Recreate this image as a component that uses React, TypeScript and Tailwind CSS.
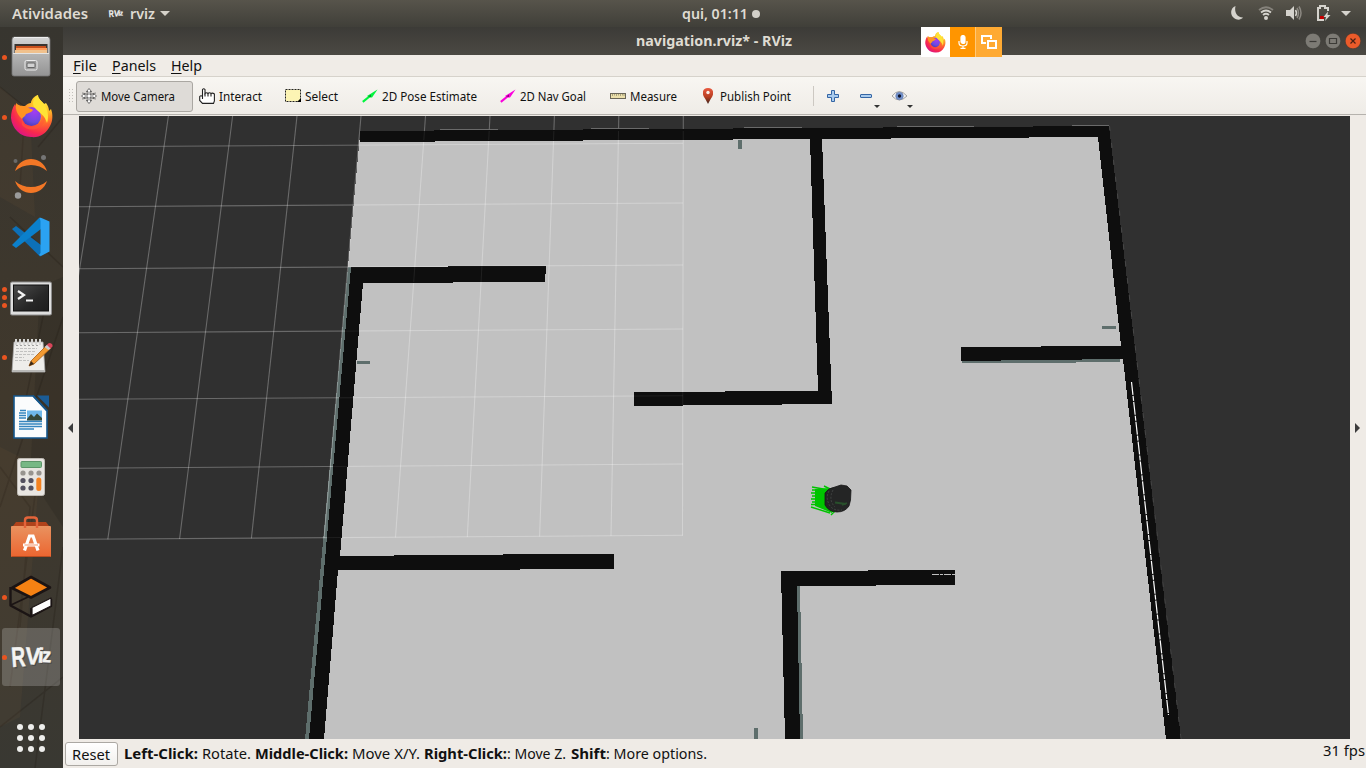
import React, { useLayoutEffect, useRef, useState } from "react";

type FitProps = { w: number; children: React.ReactNode; className?: string };

/* Text label condensed horizontally so that it fills exactly `w` pixels. */
function Fit({ w, children, className = "" }: FitProps) {
  const ref = useRef<HTMLSpanElement>(null);
  const [k, setK] = useState(1);
  useLayoutEffect(() => {
    if (ref.current && ref.current.offsetWidth) {
      const range = document.createRange();
      range.selectNodeContents(ref.current);
      const natural = range.getBoundingClientRect().width / k;
      setK(w / natural);
    }
  }, [w]);
  return (
    <span className={`block shrink-0 whitespace-nowrap ${className}`} style={{ width: w }}>
      <span ref={ref} className="inline-block origin-left" style={{ transform: `scaleX(${k})` }}>
        {children}
      </span>
    </span>
  );
}

function Firefox({ className }: { className: string }) {
  return (
    <svg viewBox="0 0 42 43" className={className}>
      <defs>
        <radialGradient id="ffBody" cx="0.78" cy="0.12" r="1">
          <stop offset="0" stopColor="#fff04a" />
          <stop offset="0.3" stopColor="#ffbd27" />
          <stop offset="0.55" stopColor="#ff6a2c" />
          <stop offset="0.8" stopColor="#f8284e" />
          <stop offset="1" stopColor="#d9138a" />
        </radialGradient>
        <radialGradient id="ffGlobe" cx="0.65" cy="0.25" r="0.9">
          <stop offset="0" stopColor="#a43cf2" />
          <stop offset="0.6" stopColor="#6a4ae0" />
          <stop offset="1" stopColor="#3f35a8" />
        </radialGradient>
      </defs>
      <path d="M4 9 C5 11 5 12 7 13 C9 11 12 11 14 11 C16 9 18 8 20 8 C20 5 23 1 27 0 C27 4 31 6 33 9 L35 8 C37 11 38 13 38 16 L40 14 C42 19 42 26 39 31 C35 39 28 43 20 42 C9 42 1 33 0 23 C0 18 1 13 4 9Z" fill="url(#ffBody)" />
      <circle cx="20.5" cy="21.500" r="9.500" fill="url(#ffGlobe)" />
      <path d="M5 8 C8 11 11 11 15 11 C17 14 21 13 22 15 C20 18 17 18 15 19 C14 22 12 22 11 24 C7 20 4 16 5 8Z" fill="#ff9422" />
      <path d="M11 25 C13 34 26 34 30 26 C32 19 28 13 23 11 C30 10 36 17 34 25 C31 35 17 38 11 30Z" fill="#ff5637" opacity="0.6" />
      <path d="M27 0 C27 4 31 6 33 9 C37 14 38 22 36 28 C34 20 28 18 24 13 C20 9 23 2 27 0Z" fill="#ffe336" />
    </svg>
  );
}

function RvizLetters() {
  return (
    <>
      <text x="12" y="40" fontSize="28" transform="rotate(-4 12 40)" textLength="14" lengthAdjust="spacingAndGlyphs">R</text>
      <text x="25" y="37" fontSize="24" transform="rotate(3 25 37)" textLength="15" lengthAdjust="spacingAndGlyphs">V</text>
      <text x="37.500" y="35.500" fontSize="21" transform="rotate(4 38 35)">i</text>
      <text x="42" y="35" fontSize="20" transform="rotate(2 42 35)" textLength="9" lengthAdjust="spacingAndGlyphs">z</text>
    </>
  );
}

function RvizMark() {
  return (
    <g fontFamily="'Liberation Sans', sans-serif" fontWeight="700">
      <g fill="#4a4a48" transform="translate(1.2 1.4)"><RvizLetters /></g>
      <g fill="#f4f4f2" stroke="#f4f4f2" strokeWidth="0.500"><RvizLetters /></g>
    </g>
  );
}

const rowSvg = "block h-[60px] w-[63px]";

const dock: { dots: number[]; active?: boolean; icon: React.ReactNode }[] = [
  {
    dots: [30],
    icon: (
      <svg viewBox="0 0 63 60" className={rowSvg}>
        <defs>
          <linearGradient id="cab" x1="0" y1="0" x2="0" y2="1">
            <stop offset="0" stopColor="#d6d6d6" />
            <stop offset="0.45" stopColor="#b4b4b4" />
            <stop offset="1" stopColor="#939393" />
          </linearGradient>
        </defs>
        <path d="M14 10h34q2 0 2 3v34q0 2-2 2H14q-2 0-2-2V13q0-3 2-3z" fill="url(#cab)" stroke="#777" strokeWidth="0.8" />
        <path d="M14 10.500h34" stroke="#eee" />
        <rect x="14.500" y="17" width="33" height="9" fill="#3b3430" />
        <rect x="16" y="19" width="30" height="7" fill="#c94f1c" />
        <rect x="16" y="21" width="31" height="2" fill="#ff9b58" />
        <rect x="15" y="23" width="32" height="3" fill="#f0c18d" />
        <path d="M13 26.500h36" stroke="#e4e4e4" />
        <rect x="25" y="33.500" width="12" height="9.500" rx="1.500" fill="#9b9b9b" stroke="#ededed" />
        <rect x="27" y="36" width="8" height="4.500" rx="1" fill="#d2d2d2" stroke="#666" />
      </svg>
    ),
  },
  {
    dots: [30],
    icon: (
      <div className="flex h-[60px] w-[63px] items-center justify-center pb-0.5">
        <Firefox className="h-[43px] w-[42px]" />
      </div>
    ),
  },
  {
    dots: [],
    icon: (
      <svg viewBox="0 0 63 60" className={rowSvg}>
        <path d="M15 24 C20 8 42 8 47 24 C38 16 24 16 15 24Z" fill="#f37726" />
        <path d="M15 34 C20 50 42 50 47 34 C38 42 24 42 15 34Z" fill="#f37726" />
        <circle cx="43.500" cy="10.500" r="2.500" fill="#757575" />
        <circle cx="15.500" cy="14" r="2" fill="#6a6a6a" />
        <circle cx="18" cy="48.500" r="3.200" fill="#9b9b9b" />
      </svg>
    ),
  },
  {
    dots: [],
    icon: (
      <svg viewBox="0 0 63 60" className={rowSvg}>
        <path d="M12 22 L16 19 L41 38 V49 L40 49.500 Z" fill="#0d70b8" />
        <path d="M12 38 L16 41 L41 22 V11 L39 11 Z" fill="#0b80cc" />
        <path d="M39.500 10.500 L41.500 11 L49.500 14.500 V44.500 L41 49 L39 48 L40.500 46 V14 Z" fill="#2ba2f2" />
      </svg>
    ),
  },
  {
    dots: [22, 30, 38],
    icon: (
      <svg viewBox="0 0 63 60" className={rowSvg}>
        <defs>
          <linearGradient id="term" x1="0" y1="0" x2="1" y2="1">
            <stop offset="0" stopColor="#4b4b4b" />
            <stop offset="0.6" stopColor="#272727" />
            <stop offset="1" stopColor="#1d1d1d" />
          </linearGradient>
        </defs>
        <rect x="10.500" y="15" width="41" height="33" rx="1.500" fill="#dedede" stroke="#8e8e8e" />
        <rect x="13.500" y="18" width="35" height="26" fill="url(#term)" stroke="#111" />
        <path d="M18 24 L24 28 L18 32" fill="none" stroke="#f2f2f2" strokeWidth="2.200" />
        <path d="M26 33.500h7" stroke="#f2f2f2" strokeWidth="2" />
      </svg>
    ),
  },
  {
    dots: [30],
    icon: (
      <svg viewBox="0 0 63 60" className={rowSvg}>
        <path d="M14 15h29l2 30H12z" fill="#eeedea" stroke="#aaa" strokeWidth="0.8" />
        <path d="M12 43h33v2H12z" fill="#b9b9b7" />
        <path d="M16 12v6M20 12v6M24 12v6M28 12v6M32 12v6M36 12v6M40 12v6" stroke="#d6d6d4" strokeWidth="2" />
        <path d="M17 18v1M21 18v1M25 18v1M29 18v1M33 18v1M37 18v1" stroke="#555" />
        <path d="M16 21.500h21M16 24.500h19M15 27.500h20M15 30.500h9M15 33.500h14" stroke="#c2c2c0" strokeDasharray="3 1" />
        <path d="M29 39 L31 34 L47 18 L51 21 L34 37 Z" fill="#f29a32" stroke="#a85d12" strokeWidth="0.8" />
        <path d="M29 39 L31 34 L34 37 Z" fill="#3a2a1a" />
        <path d="M46 18.500 L49 16 Q53 16 52.500 19.500 L50 22 Z" fill="#d9455a" />
        <path d="M44.500 20 L47 18 L50.500 21.500 L48.500 23Z" fill="#c9cccf" />
      </svg>
    ),
  },
  {
    dots: [],
    icon: (
      <svg viewBox="0 0 63 60" className={rowSvg}>
        <path d="M14 9h19l14 15v27H14z" fill="#fbfcfd" stroke="#15568c" strokeWidth="1.600" />
        <path d="M33 8.500 L47.500 24" stroke="#15568c" strokeWidth="1.800" />
        <path d="M37 8.500h12v12z" fill="#1b5c96" />
        <rect x="27" y="23.500" width="15" height="10" fill="#6fb8ea" />
        <path d="M27 32 L31 27 L34 30 L37 26.500 L42 31 V33.500 H27Z" fill="#36483a" />
        <path d="M20 23.500h6M19 26h7M19 28.500h7M19 31h7M19 34.500h23M19 37h23M19 39.500h23M19 42h15" stroke="#3585bf" strokeWidth="1.300" />
      </svg>
    ),
  },
  {
    dots: [],
    icon: (
      <svg viewBox="0 0 63 60" className={rowSvg}>
        <rect x="17.500" y="11.500" width="27" height="37" rx="2" fill="#e8e5e1" stroke="#bcb8b2" />
        <rect x="21" y="14.500" width="20.500" height="6" rx="1" fill="#77b885" stroke="#5d9569" />
        <g fill="#98948f">
          <circle cx="23" cy="26" r="2.600" /><circle cx="31" cy="26" r="2.600" /><circle cx="39" cy="26" r="2.600" />
        </g>
        <g fill="#54505f">
          <circle cx="23" cy="33.500" r="2.600" /><circle cx="31" cy="33.500" r="2.600" />
          <circle cx="23" cy="41" r="2.600" /><circle cx="31" cy="41" r="2.600" />
        </g>
        <rect x="36.300" y="30.500" width="5" height="13.500" rx="2.500" fill="#f58220" />
      </svg>
    ),
  },
  {
    dots: [],
    icon: (
      <svg viewBox="0 0 63 60" className={rowSvg}>
        <defs>
          <linearGradient id="bag" x1="0" y1="0" x2="0" y2="1">
            <stop offset="0" stopColor="#e9925f" />
            <stop offset="1" stopColor="#ec6530" />
          </linearGradient>
        </defs>
        <rect x="11" y="19" width="40" height="31" rx="1" fill="url(#bag)" />
        <path d="M13 19 L16 15 H46 L49 19Z" fill="#b0431b" />
        <path d="M25 21 V13.500 Q25 10.500 28 10.500 H34 Q37 10.500 37 13.500 V21" fill="none" stroke="#e4643a" strokeWidth="2.400" />
        <path d="M12 49.500h38" stroke="#b84c20" />
        <path d="M24.500 43.500 L29.500 29 H33 L38 43.500" fill="none" stroke="#fff" strokeWidth="3.200" />
        <path d="M23 38h16.500" stroke="#fff" strokeWidth="3" />
        <path d="M24.500 38h13.500" stroke="#f07a48" strokeWidth="0.800" />
      </svg>
    ),
  },
  {
    dots: [30],
    icon: (
      <svg viewBox="0 0 63 60" className={rowSvg}>
        <path d="M12 21 L31 10 L50 20.500 L31 30.500Z" fill="#f58113" stroke="#1b1414" strokeWidth="2.600" strokeLinejoin="round" />
        <path d="M10.500 20 V38.500 L31 49.500 L51 39 V32" fill="none" stroke="#1b1414" strokeWidth="2.400" strokeLinejoin="round" />
        <path d="M11 38 L28 30M31 41V49" stroke="#1b1414" strokeWidth="1.800" />
        <path d="M32 40.500 L51 31 V39 L32 48.500Z" fill="#fff" stroke="#1b1414" strokeWidth="1.200" strokeLinejoin="round" />
      </svg>
    ),
  },
  {
    dots: [30],
    active: true,
    icon: (
      <svg viewBox="0 0 63 60" className={rowSvg}>
        <RvizMark />
      </svg>
    ),
  },
];

function Dock() {
  return (
    <aside className="relative flex w-[63px] shrink-0 flex-col overflow-hidden bg-linear-to-b from-[#37352f] via-[#40382c] to-[#393832]">
      <svg viewBox="0 0 63 741" className="absolute inset-0 h-[741px] w-[63px]">
        <g stroke="#241f18" strokeWidth="1.500" opacity="0.3" fill="none">
          <path d="M0 60 L25 80 L20 160 M38 120 L63 90 M10 190 L63 240 M45 280 L20 400 M63 290 L0 480 M0 440 L30 480 L20 600 M40 430 L10 660 M63 520 L35 741 M0 700 L63 650" />
        </g>
        <path d="M0 60 L30 85 L35 190 L0 170Z M0 420 L40 440 L20 690 L0 700Z" fill="#70543a" opacity="0.14" />
        <path d="M40 260 L63 250 V500 L30 450Z" fill="#1d1c18" opacity="0.2" />
      </svg>
      {dock.map((d, i) => (
        <div key={i} className="relative h-[60px] shrink-0">
          {d.active && <div className="absolute inset-y-px left-[2px] w-[58px] rounded-[3px] bg-white/20" />}
          <div className="relative">{d.icon}</div>
          {d.dots.map((y) => (
            <i key={y} className="absolute left-[2px] size-[5px] rounded-full bg-[#e95420]" style={{ top: y - 2 }} />
          ))}
        </div>
      ))}
      <div className="relative mt-[37px] ml-[17px] grid w-7 grid-cols-3 gap-[5px]">
        {Array.from({ length: 9 }, (_, i) => (
          <i key={i} className="size-[6px] rounded-full bg-[#eeeeec]" />
        ))}
      </div>
    </aside>
  );
}

function TopBar() {
  return (
    <header className="flex h-[27px] shrink-0 items-center bg-linear-to-b from-[#57544b] to-[#403f39] text-[14px] leading-[27px] font-semibold text-[#dfdbd2]">
      <Fit w={76} className="ml-3">Atividades</Fit>
      <svg viewBox="9 17 45 27" className="ml-5 h-[10px] w-4"><RvizMark /></svg>
      <Fit w={25} className="ml-[6px]">rviz</Fit>
      <svg viewBox="0 0 10 5" className="ml-[5px] h-[5px] w-[10px]"><path d="M0 0h10L5 5z" fill="#d5d2c9" /></svg>
      <Fit w={66} className="ml-[512px]">qui, 01:11</Fit>
      <i className="ml-1 size-2 rounded-full bg-[#d2cfc8]" />
      <div className="ml-auto flex items-center pr-[15px] pb-px">
        <svg viewBox="0 0 14 16" className="h-4 w-[14px]"><path d="M5.500 1 C0 3 0 10 4 13 C7 15.500 11 15 13 12.500 C7 12.500 4 7 5.500 1Z" fill="#d5d3cd" /></svg>
        <svg viewBox="0 0 16 16" className="ml-[14px] h-4 w-4" fill="none" strokeWidth="1.800">
          <path d="M1 5 Q8 -0.500 15 5" stroke="#85827b" />
          <path d="M3 7.500 Q8 3.500 13 7.500M5 10 Q8 7.500 11 10" stroke="#d5d3cd" />
          <circle cx="8" cy="13" r="2" fill="#d5d3cd" />
        </svg>
        <svg viewBox="0 0 16 16" className="ml-3 h-4 w-4" fill="none" strokeWidth="1.500">
          <path d="M0 5h4l4-4v14l-4-4H0z" fill="#d5d3cd" />
          <path d="M9.500 5 Q11.500 8 9.500 11" stroke="#d5d3cd" />
          <path d="M11 3 Q14 8 11 13M13 1.500 Q17 8 13 14.500" stroke="#8c8982" />
        </svg>
        <svg viewBox="0 0 15 16" className="ml-[14px] h-4 w-[15px]">
          <path d="M8 15H2V3H4V1H9V3H12V6" fill="none" stroke="#d5d3cd" strokeWidth="2" />
          <path d="M4 11h4v3H4z" fill="#c50000" />
          <path d="M12 6.500 L7.500 12 H10 L9 16 L14.500 10 H11.500Z" fill="#d5d3cd" />
        </svg>
        <svg viewBox="0 0 10 5" className="ml-[10px] h-[5px] w-[10px]"><path d="M0 0h10L5 5z" fill="#d5d3cd" /></svg>
      </div>
    </header>
  );
}

function TitleBar() {
  return (
    <div className="flex h-7 items-center bg-linear-to-b from-[#3c3b37] to-[#4b4943] text-[13.500px] leading-7 font-bold text-[#dfdbd2]">
      <Fit w={156} className="ml-[573px]">navigation.rviz* - RViz</Fit>
      <div className="ml-auto flex gap-1 pr-[5px]">
        {["M4.500 8.500h7", "M4.500 5.500h7v5h-7z", "M5.500 5.500l5 5M10.500 5.500l-5 5"].map((d, i) => (
          <svg key={d} viewBox="0 0 16 16" className="size-4">
            <circle cx="8" cy="8" r="7.800" fill={i === 2 ? "#ec5b2a" : "#7d7b75"} stroke="#33322e" strokeWidth="0.500" />
            <path d={d} fill="none" stroke={i === 2 ? "#4a2013" : "#3c3b37"} strokeWidth="1.200" />
          </svg>
        ))}
      </div>
    </div>
  );
}

function MenuBar() {
  return (
    <div className="flex h-[22px] items-start border-b border-[#d6d2cb] bg-[#f0ece7] pl-[10px] text-[14.500px] leading-5 text-[#111]">
      <Fit w={24}><u className="underline-offset-2">F</u>ile</Fit>
      <Fit w={44} className="ml-[15px]"><u className="underline-offset-2">P</u>anels</Fit>
      <Fit w={31} className="ml-[15px]"><u className="underline-offset-2">H</u>elp</Fit>
    </div>
  );
}

const arrowIcon = (c: string, d: string) => (
  <svg viewBox="0 0 16 14" className="h-[14px] w-4">
    <path d="M0.800 12.800 L8 7" stroke={c} strokeWidth="2.200" />
    <path d="M5 7 L15.500 0.500 L10 8.500 L8 8.500Z" fill={c} />
    <path d="M6 7.500 L9 5.500 L9 8Z" fill={d} />
  </svg>
);

function ToolBar() {
  return (
    <div className="flex h-[38px] items-center border-b border-[#b5b2ad] bg-linear-to-b from-[#f8f6f2] to-[#efece7] pt-px text-[12.500px] leading-[18px] text-[#111]">
      <div className="ml-[5px] h-4 w-[5px] bg-[radial-gradient(#c3c0bb_0.8px,transparent_1px)] bg-[length:3px_3px]" />
      <div className="ml-[3px] flex h-[31px] w-[117px] items-center rounded-[3px] border border-[#aaa7a2] bg-[#dedbd7] pl-1">
        <svg viewBox="0 0 16 16" className="size-4" fill="#fff" stroke="#4d4d4d" strokeWidth="0.800">
          <path d="M1 5 Q8 7.500 15 5M1 11 Q8 8.500 15 11M5 4 Q8 2.500 11 4M5 12 Q8 13.500 11 12" fill="none" strokeWidth="0.600" />
          <path d="M8 0.500 L10.500 3.500 H9 V7 H12.500 V5.500 L15.500 8 L12.500 10.500 V9 H9 V12.500 H10.500 L8 15.500 L5.500 12.500 H7 V9 H3.500 V10.500 L0.500 8 L3.500 5.500 V7 H7 V3.500 H5.500Z" />
        </svg>
        <Fit w={74} className="ml-1 pt-[2px]">Move Camera</Fit>
      </div>
      <svg viewBox="0 0 16 16" className="ml-[6px] size-4" fill="#fff" stroke="#222" strokeWidth="1.100">
        <path d="M3.500 8 V1.500 Q4.700 0 6 1.500 V5.500 Q7.500 4 9 5.500 Q10.500 4 12 5.500 Q13.500 4.500 15.400 6 V13 L14.500 15.400 H3.500 L0.700 12.500 V8.500 Q2 7 3.500 8.500 V11" />
        <path d="M6 5.500v3M9 5.500v3M12 6v2.500" fill="none" />
      </svg>
      <Fit w={43} className="ml-1 pt-[2px]">Interact</Fit>
      <svg viewBox="0 0 16 14" className="ml-[23px] h-[14px] w-4">
        <rect x="0.500" y="0.500" width="15" height="12" fill="#fcf4b4" stroke="#222" strokeDasharray="2 1" />
        <path d="M16 9v4h-4z" fill="#000" />
      </svg>
      <Fit w={33} className="ml-1 pt-[2px]">Select</Fit>
      <div className="ml-6 flex">{arrowIcon("#00f53d", "#0a8f2b")}</div>
      <Fit w={95} className="ml-1 pt-[2px]">2D Pose Estimate</Fit>
      <div className="ml-[23px] flex">{arrowIcon("#fb00dc", "#910080")}</div>
      <Fit w={66} className="ml-1 pt-[2px]">2D Nav Goal</Fit>
      <svg viewBox="0 0 16 6" className="ml-6 h-[6px] w-4">
        <rect x="0.500" y="0.500" width="15" height="5" fill="#ece0ab" stroke="#6a6658" />
        <path d="M2.500 1v2M4.500 1v1.500M6.500 1v2M8.500 1v1.500M10.500 1v2M12.500 1v1.500M14 1v2" stroke="#8d8668" strokeWidth="0.700" />
      </svg>
      <Fit w={47} className="ml-1 pt-[2px]">Measure</Fit>
      <svg viewBox="0 0 10 16" className="ml-[26px] h-4 w-[10px]">
        <defs>
          <linearGradient id="pin" x1="0" y1="0" x2="0" y2="1">
            <stop offset="0" stopColor="#e95a40" /><stop offset="0.55" stopColor="#b83f22" /><stop offset="1" stopColor="#3c241c" />
          </linearGradient>
        </defs>
        <path d="M5 0 C-1 0-1 6 1 9 C3 12 4 14 5 16 C6 14 7 12 9 9 C11 6 11 0 5 0Z" fill="url(#pin)" />
        <circle cx="5" cy="4.500" r="1.700" fill="#f9efe9" />
      </svg>
      <Fit w={71} className="ml-[7px] pt-[2px]">Publish Point</Fit>
      <div className="ml-[22px] h-5 w-px bg-[#ccc8c2]" />
      <svg viewBox="0 0 12 12" className="ml-[13px] size-3"><path d="M4.500 0.500h3v4h4v3h-4v4h-3v-4h-4v-3h4z" fill="#a9cbed" stroke="#3465a4" /></svg>
      <svg viewBox="0 0 19 12" className="ml-[21px] h-3 w-[19px] overflow-visible">
        <rect x="0.500" y="4.500" width="11" height="3" rx="0.500" fill="#a9cbed" stroke="#3465a4" /><path d="M14 15h6l-3 3z" fill="#333" />
      </svg>
      <svg viewBox="0 0 22 12" className="ml-[13px] h-3 w-[22px] overflow-visible">
        <path d="M0 6 Q7 -3 15 6 Q7 14 0 6Z" fill="#f5f5f5" stroke="#a3a3a0" />
        <circle cx="7.500" cy="6" r="3.800" fill="#6f90cc" stroke="#6a7ba4" strokeWidth="0.600" /><circle cx="7.500" cy="6" r="1.700" fill="#10152a" />
        <path d="M15 15h6l-3 3z" fill="#333" />
      </svg>
    </div>
  );
}

const gridRows = [[146.7, 143.3], [206.7, 203], [268.7, 265], [332.7, 329], [399.3, 395.7], [468.3, 464], [539.3, 535.3]];
const gridCols = [[104.2, 36], [168.400, 107.800], [232.600, 179.600], [297, 251.400], [361, 324], [425.500, 395.500], [490, 467.300], [554.400, 539.600], [618.800, 611], [683.300, 682.500]];

/* Each column ends on the last grid row, which rises slightly to the right. */
function Grid({ opacity }: { opacity: number }) {
  return (
    <g stroke="#fff" strokeOpacity={opacity} strokeWidth="1.100">
      {gridRows.map(([a, b]) => <line key={a} x1="79" x2="683" y1={a} y2={b} />)}
      {gridCols.map(([a, b]) => <line key={a} x1={a} x2={b} y1="116" y2={539.5 - (b - 79) * 0.0066} />)}
    </g>
  );
}

function Scene() {
  return (
    <svg viewBox="79 116 1271 623" className="block h-[623px] w-[1271px] shrink-0 bg-[#303030]">
      <g shapeRendering="crispEdges">
        <path d="M360 135 L1104 130 L1172 739 H316 L356 275 L348 267Z" fill="#c1c1c1" />
        <path d="M348 267 H352 L310 739 H305Z M357 361h13v3h-13z M738 140h4v9h-4z M1102 326h14v3h-14z M754 728h4v11h-4z M961 359h159v3h-44v1H962z M796 586h4l3 153h-4z" fill="#5e6e6c" />
      </g>
      <Grid opacity={0.28} />
      <g fill="#0e0e0e" shapeRendering="crispEdges">
        <path d="M360 131 L1109 126 L1134 340 L1181 739 H1166 L1123 359 L961 361 V347.500 L1121 345.500 L1098 137 L822 139 L832 404 L634 406 V392.500 L818 390.500 L810 139 L360 142Z" />
        <path d="M351 267.500 L546 265.500 L545 282 L363 283 L340 556 L614 553.500 V569 L338 570.500 L324 739 H309Z" />
        <path d="M781 571.500 L955 569.500 V585 L797 586 L800 739 H785Z" />
      </g>
      <clipPath id="walls">
        <path d="M360 131 H690 V140 H360Z M351 267 L546 266 V282 H363 L340 556 H320Z M634 392H690V406H634Z" />
      </clipPath>
      <g clipPath="url(#walls)"><Grid opacity={0.07} /></g>
      <path d="M440 129.500h58M591 128.500h58M744 127.500h58M897 126.500h77M1072 125.500h37" stroke="#707070" strokeWidth="0.900" />
      <path d="M1109.500 126 L1181 739" stroke="#4a4a4a" strokeWidth="0.900" strokeDasharray="5 12" />
      <path d="M1131.500 382 L1168.500 715" stroke="#fff" strokeWidth="1.200" strokeDasharray="13 1 5 1" />
      <path d="M932 574.500h23" stroke="#c0c0c0" strokeWidth="1" strokeDasharray="7 1 3 1" />
      <path d="M815 489 L832 488 V513 L815 506Z" fill="#00c400" />
      <path d="M812 487l17 3M812 490h15M811 493h15M812 496h15M811 499h15M812 502h15M811 504.500h15M811 507 L830 513M824 486l6 3M829 510l5 2-3 3" fill="none" stroke="#00c400" strokeWidth="1.400" />
      <path d="M825 493 Q828 488 835 487 L841 485 L847 486 L851 490 L850.500 500 L849 506 Q845 512 837 512 Q829 512 825 505Z" fill="#242525" stroke="#161616" strokeWidth="0.800" />
      <path d="M829 491 Q825 498 830 506 Q834 511 842 510M833 490 Q828 500 835 507" fill="none" stroke="#444746" strokeWidth="0.900" strokeDasharray="2 1.500" />
      <path d="M835 502.500 L846 504M842 505l5-2" stroke="#284f2b" strokeWidth="1.800" />
    </svg>
  );
}

function StatusBar() {
  return (
    <footer className="flex h-[29px] items-start pl-[2px] text-[14.300px] leading-[22px] text-[#111]">
      <button className="mt-[3px] flex h-6 w-[53px] items-center rounded-[3px] border border-[#aba8a3] bg-linear-to-b from-white to-[#f2f0ed] pt-px pl-[6px]">
        <Fit w={38}>Reset</Fit>
      </button>
      <div className="mt-1 ml-[6px] flex">
        <Fit w={74} className="font-bold">Left-Click:</Fit>
        <Fit w={49} className="ml-1">Rotate.</Fit>
        <Fit w={93} className="ml-1 font-bold">Middle-Click:</Fit>
        <Fit w={68} className="ml-1">Move X/Y.</Fit>
        <Fit w={83} className="ml-1 font-bold">Right-Click:</Fit>
        <Fit w={59}>: Move Z.</Fit>
        <Fit w={35} className="ml-[5px] font-bold">Shift</Fit>
        <Fit w={101}>: More options.</Fit>
      </div>
      <Fit w={42} className="mt-px mr-px ml-auto">31 fps</Fit>
    </footer>
  );
}

export default function App() {
  return (
    <div className="relative flex h-[768px] w-[1366px] flex-col overflow-hidden bg-[#efebe6] font-['Noto_Sans','Open_Sans',sans-serif]">
      <TopBar />
      <div className="flex h-[741px]">
        <Dock />
        <main className="flex w-[1303px] flex-col">
          <TitleBar />
          <MenuBar />
          <ToolBar />
          <div className="mt-px flex h-[623px] items-center">
            <div className="flex w-4 shrink-0 pl-[5px]">
              <svg viewBox="0 0 5 10" className="h-[10px] w-[5px]"><path d="M5 0v10L0 5z" fill="#3c3c3c" /></svg>
            </div>
            <Scene />
            <div className="flex w-4 shrink-0 pl-[5px]">
              <svg viewBox="0 0 5 10" className="h-[10px] w-[5px]"><path d="M0 0v10l5-5z" fill="#3c3c3c" /></svg>
            </div>
          </div>
          <StatusBar />
        </main>
      </div>
      <div className="absolute top-[27px] left-[921px] flex h-[30px] w-[81px]">
        <div className="flex w-[29px] items-center justify-center bg-white"><Firefox className="size-[21px]" /></div>
        <div className="flex w-[26px] items-center justify-center border-r border-[#ffc878] bg-[#ff9500]">
          <svg viewBox="0 0 10 14" className="h-[14px] w-[10px]" fill="none" stroke="#fff" strokeWidth="1.200">
            <rect x="3" y="0.500" width="4" height="8" rx="2" fill="#fff" /><path d="M1 6v2q0 3 4 3t4-3V6M5 11v2M2.500 13.300h5" />
          </svg>
        </div>
        <div className="flex w-[26px] items-center justify-center bg-[#ffaa33]">
          <svg viewBox="0 0 16 14" className="h-[14px] w-4" fill="none" stroke="#fff" strokeWidth="2">
            <path d="M5 8H1V1h9v3" /><rect x="7" y="6" width="8" height="7" />
          </svg>
        </div>
      </div>
    </div>
  );
}
